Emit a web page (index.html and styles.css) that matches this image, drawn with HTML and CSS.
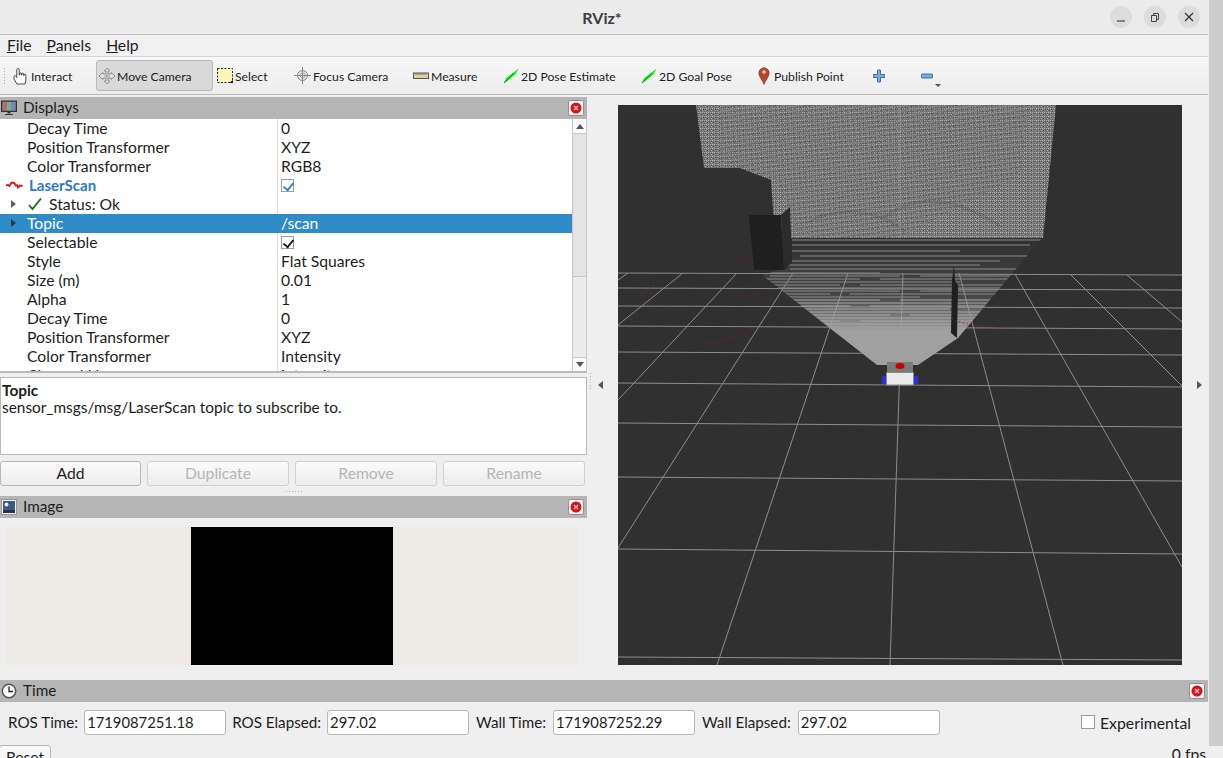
FILE: index.html
```html
<!DOCTYPE html>
<html lang="en">
<head>
<meta charset="utf-8">
<title>RViz*</title>
<link rel="stylesheet" href="styles.css">
</head>
<body>
<svg class="defs" width="0" height="0" aria-hidden="true">
  <defs>
    <symbol id="close" viewBox="0 0 16 16">
      <rect x="0.5" y="0.5" width="15" height="15" rx="2" fill="#f4f4f4" stroke="#8f8f8f"/>
      <circle cx="8" cy="8" r="5.5" fill="#d2141c"/>
      <path d="M6 6l4 4M10 6l-4 4" stroke="#f3c4c6" stroke-width="1.4"/>
    </symbol>
    <symbol id="arrow" viewBox="0 0 16 16">
      <path d="M0.500 15.500L3 10 12 3.500 15.500 0.500 13 6 4.500 13z" fill="#1ff01f"/>
      <path d="M1 15L11 5" stroke="#0e8a24" stroke-width="1"/>
    </symbol>
  </defs>
</svg>
<div class="window">
  <header class="titlebar">
    <span class="title">RViz*</span>
    <div class="winbtns">
      <span class="winbtn"><svg width="22" height="22" viewBox="0 0 22 22"><path d="M7 15h8" stroke="#444" stroke-width="1.2"/></svg></span>
      <span class="winbtn"><svg width="22" height="22" viewBox="0 0 22 22"><path d="M7.5 9.5h5v6h-5zM9.5 9.5v-2h5v6h-2" fill="none" stroke="#444"/></svg></span>
      <span class="winbtn"><svg width="22" height="22" viewBox="0 0 22 22"><path d="M7 7l8 8M15 7l-8 8" stroke="#333" stroke-width="1.2"/></svg></span>
    </div>
  </header>
  <nav class="menubar">
    <span class="menu"><u>F</u>ile</span>
    <span class="menu"><u>P</u>anels</span>
    <span class="menu"><u>H</u>elp</span>
  </nav>
  <div class="toolbar">
    <span class="grip"></span>
    <span class="tool t-interact">
      <svg width="16" height="18" viewBox="0 0 16 18"><path d="M5 1.5c1 0 1.200.6 1.200 1.500v5h.6V6.500c0-1 1.700-1 1.700 0v1.500h.5V7c0-1 1.700-1 1.700 0v1.500h.5V8c0-1 1.700-1 1.700.2v5.800l-1 3H4L1 12V9.500c0-1 1.500-1.200 2-.2l.8 1.200V3c0-1 .2-1.500 1.200-1.500z" fill="#fff" stroke="#333" stroke-width=".9"/></svg>
      <span>Interact</span></span>
    <span class="tool t-move active">
      <svg width="16" height="16" viewBox="0 0 16 16"><path d="M8 0l2.500 3H9v3h3V4.500L16 8l-4 3.500V10H9v3h1.500L8 16l-2.500-3H7v-3H4v1.500L0 8l4-3.500V6h3V3H5.500z" fill="#e6e6e6" stroke="#777" stroke-width=".8"/><path d="M5 8h6M8 5v6" stroke="#999"/></svg>
      <span>Move Camera</span></span>
    <span class="tool t-select">
      <svg width="16" height="16" viewBox="0 0 16 16"><rect x=".5" y=".5" width="15" height="14" fill="#fdf6b8" stroke="#222" stroke-dasharray="2 1.500"/><path d="M12 15h4v-3z" fill="#111"/></svg>
      <span>Select</span></span>
    <span class="tool t-focus">
      <svg width="17" height="17" viewBox="0 0 17 17"><circle cx="8.500" cy="8.500" r="5" fill="#e8e8e8" stroke="#888"/><circle cx="8.500" cy="8.500" r="2.500" fill="none" stroke="#aaa"/><path d="M8.500 0v17M0 8.500h17" stroke="#888"/></svg>
      <span>Focus Camera</span></span>
    <span class="tool t-measure">
      <svg width="16" height="16" viewBox="0 0 16 16"><rect x=".5" y="5" width="15" height="5.500" fill="#dcd29c" stroke="#555"/><path d="M3 5v2M5 5v2M7 5v2M9 5v2M11 5v2M13 5v2" stroke="#777"/></svg>
      <span>Measure</span></span>
    <span class="tool t-pose"><svg width="16" height="16"><use href="#arrow"/></svg><span>2D Pose Estimate</span></span>
    <span class="tool t-goal"><svg width="16" height="16"><use href="#arrow"/></svg><span>2D Goal Pose</span></span>
    <span class="tool t-point">
      <svg width="12" height="18" viewBox="0 0 12 18"><path d="M6 17.500C4.500 13 .8 10 .8 6a5.200 5.200 0 0 1 10.400 0c0 4-3.700 7-5.200 11.500z" fill="#b5482a" stroke="#6d3a25" stroke-width=".6"/><circle cx="6" cy="5" r="1.800" fill="#f3c9b0"/></svg>
      <span>Publish Point</span></span>
    <span class="tool t-plus">
      <svg width="12" height="14" viewBox="0 0 12 14"><path d="M4.500 1h3v4.500H12v3H7.500V13h-3V8.500H0v-3h4.500z" fill="#7fa8dc" stroke="#3c6fb0"/></svg></span>
    <span class="tool t-minus">
      <svg width="12" height="14" viewBox="0 0 12 14"><rect x=".5" y="5" width="11" height="4" rx=".5" fill="#7fa8dc" stroke="#3c6fb0"/></svg>
      <i class="more"></i></span>
  </div>
  <main class="main">
    <section class="leftcol">
      <div class="dock">
        <div class="dockhead">
          <svg class="dockicon" width="16" height="16" viewBox="0 0 16 16"><rect x=".5" y="1" width="15" height="10.500" fill="#566" stroke="#333"/><rect x="1.500" y="2" width="4.500" height="8.500" fill="#b06a78"/><rect x="6" y="2" width="4" height="8.500" fill="#7fae7a"/><rect x="10" y="2" width="4.500" height="8.500" fill="#7a86c2"/><path d="M6.500 11.500h3v2h-3zM4 14h8v1H4z" fill="#333"/></svg>
          <span class="docktitle">Displays</span>
          <svg class="closebtn" width="16" height="16"><use href="#close"/></svg>
        </div>
        <div class="tree">
          <div class="rows">
            <div class="row"><span class="name">Decay Time</span><span class="val">0</span></div>
            <div class="row"><span class="name">Position Transformer</span><span class="val">XYZ</span></div>
            <div class="row"><span class="name">Color Transformer</span><span class="val">RGB8</span></div>
            <div class="row"><span class="name laser"><svg class="laser-icon" width="17" height="10" viewBox="0 0 17 10"><path d="M0 5.500l2-.5 1.500 1 2-3.500 3 .5 1 2.500 1.500-.5 1 2.500 2-2 2.500.5" fill="none" stroke="#e01010" stroke-width="1.800"/></svg>LaserScan</span><span class="val"><i class="check blue"></i></span></div>
            <div class="row"><span class="name status"><i class="expander"></i><svg class="ok" width="14" height="14" viewBox="0 0 14 14"><path d="M1 8l3.500 4L13 1.500" fill="none" stroke="#1c6e1c" stroke-width="1.800"/></svg>Status: Ok</span><span class="val"></span></div>
            <div class="row selected"><span class="name"><i class="expander sel"></i>Topic</span><span class="val">/scan</span></div>
            <div class="row"><span class="name">Selectable</span><span class="val"><i class="check"></i></span></div>
            <div class="row"><span class="name">Style</span><span class="val">Flat Squares</span></div>
            <div class="row"><span class="name">Size (m)</span><span class="val">0.01</span></div>
            <div class="row"><span class="name">Alpha</span><span class="val">1</span></div>
            <div class="row"><span class="name">Decay Time</span><span class="val">0</span></div>
            <div class="row"><span class="name">Position Transformer</span><span class="val">XYZ</span></div>
            <div class="row"><span class="name">Color Transformer</span><span class="val">Intensity</span></div>
            <div class="row"><span class="name">Channel Name</span><span class="val">intensity</span></div>
          </div>
          <div class="scrollbar">
            <span class="sb-btn"><i class="tri up"></i></span>
            <span class="sb-thumb"></span>
            <span class="sb-rest"></span>
            <span class="sb-btn down"><i class="tri dn"></i></span>
          </div>
        </div>
        <div class="desc"><b>Topic</b><br>sensor_msgs/msg/LaserScan topic to subscribe to.</div>
        <div class="btnrow">
          <span class="btn first">Add</span>
          <span class="btn off">Duplicate</span>
          <span class="btn off">Remove</span>
          <span class="btn off">Rename</span>
        </div>
        <div class="hgrip"></div>
      </div>
      <div class="dock imgdock">
        <div class="dockhead">
          <svg class="dockicon" width="16" height="16" viewBox="0 0 16 16"><rect x=".5" y=".5" width="15" height="15" fill="#f2f2f2" stroke="#999"/><rect x="2" y="2" width="12" height="12" fill="#3d5a86"/><circle cx="5.500" cy="5.500" r="2" fill="#f4eeb0"/><path d="M2 11h12v3H2z" fill="#2a3448"/></svg>
          <span class="docktitle">Image</span>
          <svg class="closebtn" width="16" height="16"><use href="#close"/></svg>
        </div>
        <div class="imgbody"><div class="imgview"><div class="imgblack"></div></div></div>
      </div>
    </section>
    <div class="split"><i class="vgrip"></i><i class="tri lf"></i></div>
    <div class="scene">
      <svg width="564" height="560" viewBox="618 105 564 560">
        <defs>
          <pattern id="speck" width="6" height="4" patternUnits="userSpaceOnUse">
            <rect width="6" height="4" fill="#787878"/>
            <rect x="0" y="0" width="1" height="1" fill="#b0b0b0"/>
            <rect x="2" y="0" width="1" height="1" fill="#a4a4a4"/>
            <rect x="4" y="0" width="1" height="1" fill="#bcbcbc"/>
            <rect x="1" y="1" width="1" height="1" fill="#505050"/>
            <rect x="3" y="1" width="1" height="1" fill="#595959"/>
            <rect x="5" y="2" width="1" height="1" fill="#4c4c4c"/>
            <rect x="0" y="2" width="1" height="1" fill="#999"/>
            <rect x="3" y="2" width="1" height="1" fill="#a8a8a8"/>
            <rect x="2" y="3" width="1" height="1" fill="#5e5e5e"/>
          </pattern>
          <pattern id="speck2" width="5" height="5" patternUnits="userSpaceOnUse" patternTransform="rotate(-8)">
            <rect width="5" height="5" fill="#6c6c6c"/>
            <rect x="0" y="0" width="2" height="1" fill="#b8b8b8"/>
            <rect x="3" y="0" width="1" height="1" fill="#d0d0d0"/>
            <rect x="1" y="2" width="3" height="1" fill="#3e3e3e"/>
            <rect x="0" y="3" width="1" height="1" fill="#a0a0a0"/>
            <rect x="4" y="3" width="1" height="1" fill="#a8a8a8"/>
          </pattern>
          <linearGradient id="fade" x1="0" y1="0" x2="0" y2="1">
            <stop offset="0" stop-color="#a0a0a0" stop-opacity="0"/>
            <stop offset=".45" stop-color="#a0a0a0" stop-opacity=".2"/>
            <stop offset=".72" stop-color="#a0a0a0" stop-opacity="1"/>
            <stop offset="1" stop-color="#a0a0a0"/>
          </linearGradient>
          <clipPath id="fan"><path d="M792 238H1042L958 338 918 365H877L762 275 786 268 792 262z"/></clipPath>
        </defs>
        <rect class="floor" x="618" y="105" width="564" height="560"/>
        <path class="grid" d="M618 273L1182 275M618 288L1182 290M618 306L1182 308M618 326L1182 329M618 352L1182 355M618 383L1182 387M618 423L1182 427M618 477L1182 481M618 549L1182 554M618 657L1182 660"/>
        <path class="grid" d="M903 273L890 665M848 273L717 665M793 273L618 548M737 273L618 400M683 273L618 325M628 273L618 280M959 273L1063 665M1015 274L1182 567M1071 275L1182 386M1127 275L1182 322"/>
        <path class="dots faint" d="M734 258H785"/>
        <path d="M696 105H1056L1043 238H775L771 180 740 168H704z" fill="url(#speck)"/>
        <path d="M720 105H1030L1020 175 900 238 800 238 776 180 720 160z" fill="url(#speck2)" opacity=".4"/>
        <path class="moire" d="M808 222C840 205 880 210 905 232M880 220C920 190 960 200 1000 226"/>
        <path class="streak" d="M900 105V238"/>
        <g clip-path="url(#fan)">
          <rect x="750" y="240" width="300" height="126" fill="url(#fade)"/>
          <path class="st1" d="M792 240H1042M792 245H1030M792 251H960M800 256H1030M790 261H1000M786 265H980M790 269H1040M740 273H880M770 276H900M920 276H1040M740 279H860M880 279H1040M740 282H960M740 285H840M860 285H1020M740 288H1040M740 291H900M920 291H1040M740 294H830M850 294H1040M740 297H920"/>
          <path class="st2" d="M740 300H880M900 300H1040M740 303H1040M740 306H850M870 306H1040M740 309H950M740 312H1040M740 315H890M910 315H1040M740 318H1040M740 321H840M860 321H1040M740 324H1040"/>
        </g>
        <path class="block-f" d="M749 215H781L784 270H754z"/>
        <path class="block-s" d="M781 215L790 207 792 262 784 270z"/>
        <path class="block-f" d="M954 265L955 281 958 285 957 338 951 333 952 280z"/>
        <path class="dots" d="M706 344C725 341 750 335 753 327M740 297C746 296 752 295 758 293M640 295C646 291 650 288 654 285M952 318C958 324 985 328 1014 327"/>
        <rect class="r-top" x="887" y="362" width="26" height="11"/>
        <rect class="r-wheel" x="882" y="376" width="5" height="8"/>
        <rect class="r-wheel" x="913" y="376" width="5" height="8"/>
        <rect class="r-body" x="886.500" y="372.500" width="27" height="12.500"/>
        <ellipse class="r-lidar" cx="900" cy="366" rx="4.500" ry="3"/>
      </svg>
    </div>
    <div class="rightside"><i class="tri rt"></i></div>
  </main>
  <section class="timepanel">
    <div class="dockhead">
      <svg class="dockicon" width="16" height="16" viewBox="0 0 16 16"><circle cx="8" cy="8" r="6.700" fill="#fafafa" stroke="#555" stroke-width="1.500"/><path d="M8 3.500V8.500H12" fill="none" stroke="#222" stroke-width="1.300"/></svg>
      <span class="docktitle">Time</span>
      <svg class="closebtn" width="16" height="16"><use href="#close"/></svg>
    </div>
    <div class="timerow">
      <label class="tlabel">ROS Time:</label><span class="tinput">1719087251.18</span>
      <label class="tlabel">ROS Elapsed:</label><span class="tinput">297.02</span>
      <label class="tlabel wide">Wall Time:</label><span class="tinput">1719087252.29</span>
      <label class="tlabel wide">Wall Elapsed:</label><span class="tinput">297.02</span>
      <span class="exp"><i class="check empty"></i>Experimental</span>
    </div>
    <div class="resetrow">
      <span class="btn reset">Reset</span>
      <span class="fps">0 fps</span>
    </div>
  </section>
</div>
<aside class="strip"></aside>
</body>
</html>
```
FILE: styles.css
```css
* { box-sizing: border-box; }
html, body { margin: 0; height: 758px; overflow: hidden; }
body {
  display: flex;
  font-family: "Lato", "Noto Sans", sans-serif;
  font-size: 15.7px;
  color: #1d1d1d;
  background: #efefef;
}
.defs { position: absolute; }
.window { width: 1208px; height: 758px; display: flex; flex-direction: column; overflow: hidden; flex: none; }
.strip { flex: 1; height: 746px; background: #cdcdcd; border-left: 1px solid #ececec; }

.titlebar {
  height: 35px; flex: none; display: flex; align-items: center; justify-content: center;
  background: #ebebeb; border-bottom: 1px solid #bdbdbd; position: relative;
}
.title { font-weight: 700; font-size: 16px; color: #3d3d3d; margin-left: -4px; }
.winbtns { position: absolute; right: 8px; top: 6px; display: flex; gap: 12px; }
.winbtn { width: 22px; height: 22px; border-radius: 50%; background: #dcdcdc; display: block; }
.winbtn svg { display: block; }

.menubar {
  height: 22px; flex: none; display: flex; gap: 15px; padding: 0 0 2px 7px; align-items: center;
  background: #f0f0f0; border-bottom: 1px solid #d4d4d4; font-size: 15.7px;
}
.toolbar {
  height: 38px; flex: none; display: flex; align-items: center;
  background: linear-gradient(#f8f8f8, #ececec); border-bottom: 1px solid #bcbcbc;
  font-size: 12.2px;
}
.grip { width: 10px; height: 18px; flex: none; background-image: radial-gradient(circle, #aaa 40%, transparent 45%); background-size: 3px 3px; clip-path: inset(0 3px 0 2px); }
.tool { display: flex; align-items: center; gap: 2px; height: 31px; flex: none; padding-left: 3px; white-space: nowrap; position: relative; }
.tool span { padding-top: 2px; }
.tool svg { flex: none; }
.t-interact { width: 86px; }
.t-move { width: 117px; }
.active { background: #d9d9d9; border: 1px solid #b8b8b8; border-radius: 3px; padding-left: 2px; }
.t-select { width: 81px; padding-left: 4px; }
.t-focus { width: 116px; padding-left: 0; gap: 2px; }
.t-measure { width: 90px; }
.t-pose { width: 138px; }
.t-goal { width: 117px; }
.t-point { width: 115px; gap: 4px; }
.t-plus { width: 48px; }
.t-minus { width: 40px; }
.more { position: absolute; left: 17px; top: 24px; border: 3px solid transparent; border-top: 3px solid #555; border-bottom: 0; }

.main { height: 585px; flex: none; display: flex; }
.leftcol { width: 587px; flex: none; display: flex; flex-direction: column; padding-top: 2px; }
.dock { display: flex; flex-direction: column; }
.dockhead { height: 22px; flex: none; background: #b5b5b5; display: flex; align-items: center; padding: 0 3px 0 0; }
.dockicon { margin: 0 6px 0 1px; flex: none; }
.docktitle { font-size: 15.3px; flex: 1; padding-bottom: 2px; }
.closebtn { flex: none; }

.tree { height: 254px; display: flex; background: #fff; border-bottom: 2px solid #b9b9b9; overflow: hidden; }
.rows { width: 572px; flex: none; }
.row { height: 19px; display: flex; align-items: center; line-height: 19px; background: #fff; }
.name { width: 278px; flex: none; padding-left: 27px; border-right: 1px solid #dcdcdc; height: 19px; position: relative; white-space: nowrap; }
.val { padding-left: 3px; flex: 1; display: flex; align-items: center; height: 19px; }
.selected { background: #308cc6; color: #fff; }
.selected .name { border-right-color: #308cc6; }
.laser { padding-left: 29px; color: #2f78c8; font-weight: 700; font-size: 15px; }
.laser-icon { position: absolute; left: 6px; top: 4px; }
.status { padding-left: 49px; }
.ok { position: absolute; left: 28px; top: 2px; }
.expander { position: absolute; left: 11px; top: 5px; border: 4px solid transparent; border-left: 5px solid #606060; border-right: 0; }
.expander.sel { border-left-color: #1f3c55; }
.check { width: 13px; height: 13px; border: 1px solid #9c9c9c; background: #fff; position: relative; display: block; flex: none; }
.check::after { content: ""; position: absolute; left: 3px; top: 0; width: 5px; height: 9px; border: solid #111; border-width: 0 2px 2px 0; transform: rotate(40deg) scale(.9); }
.check.blue::after { border-color: #2f78c8; }
.check.empty::after { display: none; }

.scrollbar { width: 15px; flex: none; display: flex; flex-direction: column; border-left: 1px solid #c8c8c8; border-right: 1px solid #c8c8c8; background: #e6e6e6; }
.sb-btn { height: 15px; flex: none; background: #fafafa; display: flex; align-items: center; justify-content: center; border-bottom: 1px solid #c8c8c8; }
.sb-btn.down { border-bottom: 0; border-top: 1px solid #c8c8c8; height: 14px; }
.sb-thumb { height: 143px; flex: none; background: #e4e4e4; border-bottom: 1px solid #c8c8c8; }
.sb-rest { flex: 1; background: #ececec; }
.tri { display: block; width: 0; height: 0; border: 4px solid transparent; }
.tri.up { border-top: 0; border-bottom: 5px solid #555; }
.tri.dn { border-bottom: 0; border-top: 5px solid #555; }

.desc { height: 78px; margin-top: 4px; background: #fff; border: 1px solid #b9b9b9; padding: 4px 1px; line-height: 17px; flex: none; font-size: 15.4px; }
.btnrow { display: flex; gap: 6px; padding-top: 6px; height: 31px; flex: none; }
.btn { width: 142px; height: 25px; display: flex; align-items: center; justify-content: center; border: 1px solid #b8b8b8; border-radius: 3px; background: linear-gradient(#fbfbfb, #ececec); flex: none; padding-bottom: 1px; }
.btn.first { width: 141px; }
.btn.off { color: #b6b6b6; border-color: #cfcfcf; }
.hgrip { height: 10px; flex: none; background-image: repeating-linear-gradient(90deg, #b4b4b4 0 1px, transparent 1px 3px); background-size: 16px 1px; background-repeat: no-repeat; background-position: center; }
.imgdock { flex: 1; }
.imgbody { padding: 9px 9px 0 6px; flex: 1; background: #efefef; }
.imgview { height: 138px; background: #eeebe6; display: flex; justify-content: center; }
.imgblack { width: 202px; height: 138px; background: #000; }

.split { width: 31px; flex: none; position: relative; }
.vgrip { position: absolute; left: 3px; top: 278px; width: 1px; height: 17px; background-image: repeating-linear-gradient(#b4b4b4 0 1px, transparent 1px 3px); }
.tri.lf { position: absolute; left: 11px; top: 286px; border-left: 0; border-right: 5px solid #555; }
.scene { width: 564px; height: 560px; margin-top: 10px; flex: none; background: #303030; }
.scene svg { display: block; }
.rightside { flex: 1; position: relative; }
.tri.rt { position: absolute; left: 15px; top: 286px; border-right: 0; border-left: 5px solid #555; }

.floor { fill: #303030; }
.grid { fill: none; stroke: #8c8c8c; stroke-width: 1; }
.moire { fill: none; stroke: #4a4a4a; stroke-width: 3; opacity: .22; }
.streak { fill: none; stroke: #b0b0b0; stroke-width: 2; opacity: .22; }
.st1 { fill: none; stroke: #8a8a8a; stroke-width: 1; }
.st2 { fill: none; stroke: #a6a6a6; stroke-width: 1; }
.block-f { fill: #1f1f1f; }
.block-s { fill: #2b2b2b; }
.dots { fill: none; stroke: #a01818; stroke-width: 1; stroke-dasharray: 1.5 2.5; }
.dots.faint { opacity: .5; }
.r-top { fill: #7b7b7b; }
.r-wheel { fill: #2c30e0; }
.r-body { fill: #eaeaea; stroke: #8a8a8a; }
.r-lidar { fill: #c40000; }

.timepanel { flex: 1; display: flex; flex-direction: column; }
.timerow { height: 40px; flex: none; display: flex; align-items: center; padding: 0 0 0 8px; font-size: 15.2px; }
.tlabel { margin-right: 6px; white-space: nowrap; }
.tlabel.wide { margin-right: 7px; margin-left: 1px; }
.tinput { width: 142px; height: 25px; background: #fff; border: 1px solid #b8b8b8; border-radius: 3px; padding-left: 2px; line-height: 23px; margin-right: 6px; flex: none; font-size: 14.8px; }
.exp { margin-left: auto; display: flex; align-items: center; gap: 5px; padding-right: 17px; font-size: 15.8px; }
.check.empty { width: 14px; height: 14px; }
.resetrow { display: flex; justify-content: space-between; align-items: flex-start; }
.btn.reset { width: 52px; height: 25px; margin-top: 3px; margin-left: -1px; }
.fps { margin-top: 3px; padding-right: 2px; }
```
